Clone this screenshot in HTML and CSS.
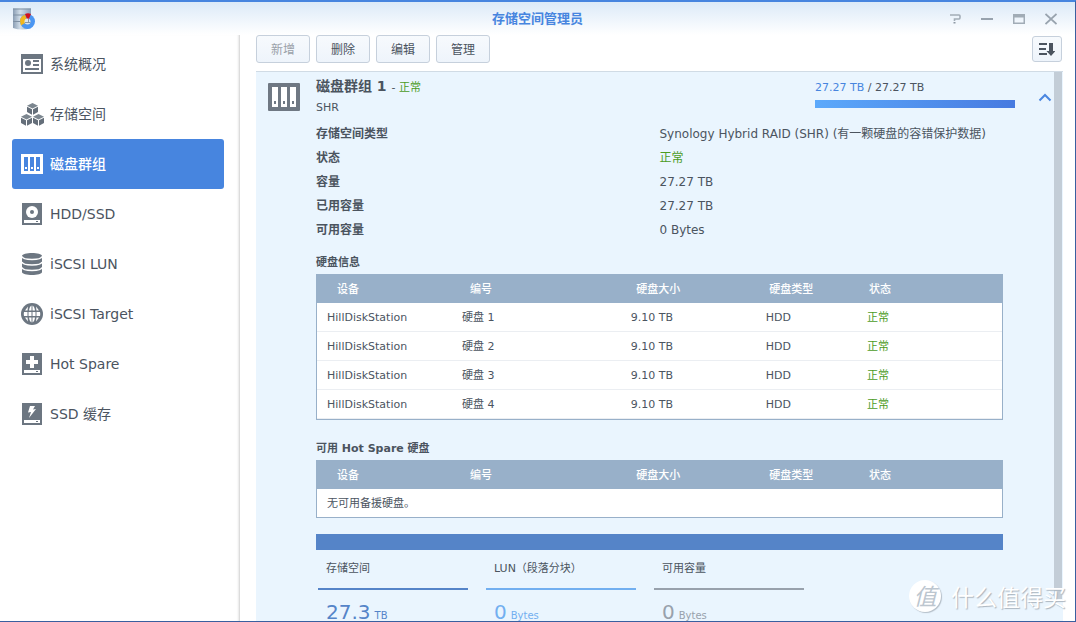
FILE: index.html
```html
<!DOCTYPE html>
<html lang="zh-CN">
<head>
<meta charset="utf-8">
<title>存储空间管理员</title>
<link rel="stylesheet" href="styles.css">
</head>
<body>
<div class="window">
  <header class="titlebar">
    <svg class="app-icon" width="24" height="24" viewBox="0 0 24 24" aria-hidden="true">
      <defs>
        <linearGradient id="steel" x1="0" x2="1" y1="0" y2="0">
          <stop offset="0" stop-color="#8a9db3"/><stop offset=".4" stop-color="#d3dfea"/><stop offset="1" stop-color="#8aa2bc"/>
        </linearGradient>
      </defs>
      <path fill="url(#steel)" d="M1 1.500h18V21q-9 3-18 0z"/>
      <path fill="none" stroke="#7f90a3" d="M1 2h18M1 8h18M1 14.500h18"/>
      <circle cx="15.500" cy="14.500" r="7.500" fill="#4b96f2"/>
      <path fill="#f2b71d" d="M15.500 14.500L9 18.500Q6 10 13 7.500z"/>
      <path fill="#d3101f" d="M16 14l-3-7q3-1.500 6 0z"/>
      <circle cx="15.500" cy="14.500" r="3" fill="#dce6ee"/>
      <path stroke="#8797a7" d="M13 15.500h5.500M16.500 12v3"/>
    </svg>
    <h1 class="app-title">存储空间管理员</h1>
    <div class="window-tools">
      <button class="tool" type="button" aria-label="帮助"><svg width="12" height="12" viewBox="0 0 12 12"><path fill="none" stroke="#a3adb7" stroke-width="1.600" d="M1 2h9q1 0 1 1v1.500q0 1.500-1 1.500H5.500v2"/><path fill="#8e99a4" d="M4.500 9h2v1.500h-2z"/></svg></button>
      <button class="tool" type="button" aria-label="最小化"><svg width="12" height="12" viewBox="0 0 12 12"><path fill="#98a3ae" d="M0 5h12v2H0z"/></svg></button>
      <button class="tool" type="button" aria-label="最大化"><svg width="12" height="12" viewBox="0 0 12 12"><path fill="#a1acb6" fill-rule="evenodd" d="M0 1h12v10H0zM1.500 4.500v5h9v-5z"/></svg></button>
      <button class="tool" type="button" aria-label="关闭"><svg width="12" height="12" viewBox="0 0 12 12"><path stroke="#98a3ae" stroke-width="1.700" d="M.500 1l11 10M11.500 1l-11 10"/></svg></button>
    </div>
  </header>

  <div class="body">
    <nav class="sidebar">
      <a class="nav-item" href="#overview"><svg width="24" height="24" viewBox="0 0 24 24"><path fill="#6c7681" d="M1 2h22v20H1z"/><path fill="#fff" d="M3 7h18v13H3z"/><circle cx="8" cy="11" r="3" fill="#6c7681"/><path fill="#6c7681" d="M13 8h6v2h-6zM13 12h6v2h-6zM5 16h14v2H5z"/></svg>系统概况</a>
      <a class="nav-item" href="#volume"><svg width="24" height="24" viewBox="0 0 24 24"><defs><g id="cube"><path fill="#7c868f" d="M5.500 0L11 2.700 5.500 5.400 0 2.700z"/><path fill="#656f7a" d="M0 3.700l5 2.500v5.500L0 9zM11 3.700L6 6.200v5.500L11 9z"/></g></defs><use href="#cube" x="7" y="1"/><use href="#cube" x="1" y="12"/><use href="#cube" x="13" y="12"/></svg>存储空间</a>
      <a class="nav-item nav-item-active" href="#group" aria-current="page"><svg width="24" height="24" viewBox="0 0 24 24"><path fill="#fff" fill-rule="evenodd" d="M1 2h22v20H1zM4 5v14h4V5zM10 5v14h4V5zM16 5v14h4V5z"/><path fill="#fff" d="M5 15h2v2H5zM11 15h2v2h-2zM17 15h2v2h-2z"/></svg>磁盘群组</a>
      <a class="nav-item" href="#hdd"><svg width="24" height="24" viewBox="0 0 24 24"><path fill="#6c7681" d="M2 1h20v22H2z"/><circle cx="12" cy="10" r="6" fill="#fff"/><circle cx="12" cy="10" r="2" fill="#6c7681"/><path fill="#fff" d="M4 18h16v3H4z"/><path fill="#6c7681" d="M16 19h2v1h-2z"/></svg>HDD/SSD</a>
      <a class="nav-item" href="#lun"><svg width="24" height="24" viewBox="0 0 24 24"><path fill="#6c7681" d="M2 4c0-4 20-4 20 0v16c0 4-20 4-20 0z"/><path fill="none" stroke="#fff" stroke-width="1.300" d="M2 4.500c1 4 19 4 20 0M2 10c1 4 19 4 20 0M2 15.500c1 4 19 4 20 0"/></svg>iSCSI LUN</a>
      <a class="nav-item" href="#target"><svg width="24" height="24" viewBox="0 0 24 24"><circle cx="12" cy="12" r="11" fill="#6c7681"/><g fill="#fff"><path d="M4 10h3.500v4H4q-.500-2 0-4zM8.500 10h3v4h-3zM12.500 10h3v4h-3zM16.500 10H20q.500 2 0 4h-3.500z"/><path d="M5 8.500L8 4.500 7.500 8.500zM9 8.500q.500-4 2.500-5v5zM12.500 8.500v-5q2 1 2.500 5zM16.500 8.500L16 4.500l3 4z"/><path d="M5 15.500l3 4-.500-4zM9 15.500q.500 4 2.500 5v-5zM12.500 15.500v5q2-1 2.500-5zM16.500 15.500l-.500 4 3-4z"/></g></svg>iSCSI Target</a>
      <a class="nav-item" href="#spare"><svg width="24" height="24" viewBox="0 0 24 24"><path fill="#6c7681" d="M2 1h20v22H2z"/><path fill="#fff" d="M10 4h4v4h4v4h-4v4h-4v-4H6V8h4zM4 18h16v3H4z"/><path fill="#6c7681" d="M16 19h2v1h-2z"/></svg>Hot Spare</a>
      <a class="nav-item" href="#cache"><svg width="24" height="24" viewBox="0 0 24 24"><path fill="#6c7681" d="M2 1h20v22H2z"/><path fill="#fff" d="M10 4h5l-2 3.500 3-.500-7 9 2-6-3 .500zM4 18h16v3H4z"/><path fill="#6c7681" d="M16 19h2v1h-2z"/></svg>SSD 缓存</a>
    </nav>

    <main class="main">
      <div class="toolbar">
        <button class="btn" type="button" disabled>新增</button>
        <button class="btn" type="button">删除</button>
        <button class="btn" type="button">编辑</button>
        <button class="btn" type="button">管理</button>
        <button class="btn btn-sort" type="button" aria-label="排序"><svg width="16" height="14" viewBox="0 0 16 14"><path fill="#4b545f" d="M0 1h8v2H0zM0 6h7v2H0zM0 11h8v2H0zM10 1h4v8h2.500L12 14 7.500 9H10z"/></svg></button>
      </div>

      <div class="panel">
        <section class="group">
          <div class="group-head">
            <svg width="32" height="28" viewBox="0 0 32 28" aria-hidden="true"><rect width="32" height="28" rx="1" fill="#6f7883"/><path fill="#fff" d="M4 4h6v20H4zM13 4h6v20h-6zM22 4h6v20h-6z"/><path fill="#6f7883" d="M6 18h2v3H6zM15 18h2v3h-2zM24 18h2v3h-2z"/></svg>
            <div class="group-name">
              <h2 class="group-title">磁盘群组 1 <span class="group-state">- <span class="ok">正常</span></span></h2>
              <p class="group-type">SHR</p>
            </div>
            <div class="usage">
              <p class="usage-text"><span class="used">27.27 TB</span> / 27.27 TB</p>
              <div class="usage-bar"></div>
            </div>
            <button class="collapse" type="button" aria-label="收起"><svg width="14" height="9" viewBox="0 0 14 9"><path fill="none" stroke="#4a86e0" stroke-width="2" d="M1.500 7.500L7 2l5.500 5.500"/></svg></button>
          </div>

          <div class="details">
            <dl class="info">
              <dt>存储空间类型</dt><dd>Synology Hybrid RAID (SHR) (有一颗硬盘的容错保护数据)</dd>
              <dt>状态</dt><dd class="ok">正常</dd>
              <dt>容量</dt><dd>27.27 TB</dd>
              <dt>已用容量</dt><dd>27.27 TB</dd>
              <dt>可用容量</dt><dd>0 Bytes</dd>
            </dl>

            <h3 class="section-title">硬盘信息</h3>
            <table class="disks">
              <thead><tr><th>设备</th><th>编号</th><th>硬盘大小</th><th>硬盘类型</th><th>状态</th></tr></thead>
              <tbody>
                <tr><td>HillDiskStation</td><td>硬盘 1</td><td>9.10 TB</td><td>HDD</td><td class="ok">正常</td></tr>
                <tr><td>HillDiskStation</td><td>硬盘 2</td><td>9.10 TB</td><td>HDD</td><td class="ok">正常</td></tr>
                <tr><td>HillDiskStation</td><td>硬盘 3</td><td>9.10 TB</td><td>HDD</td><td class="ok">正常</td></tr>
                <tr><td>HillDiskStation</td><td>硬盘 4</td><td>9.10 TB</td><td>HDD</td><td class="ok">正常</td></tr>
              </tbody>
            </table>

            <h3 class="section-title">可用 Hot Spare 硬盘</h3>
            <table class="disks disks-empty">
              <thead><tr><th>设备</th><th>编号</th><th>硬盘大小</th><th>硬盘类型</th><th>状态</th></tr></thead>
              <tbody><tr><td colspan="5">无可用备援硬盘。</td></tr></tbody>
            </table>

            <div class="allocation"></div>
            <div class="stats">
              <div class="stat stat-volume"><p class="stat-label">存储空间</p><p class="stat-value"><span>27.3</span><small>TB</small></p></div>
              <div class="stat stat-lun"><p class="stat-label">LUN（段落分块）</p><p class="stat-value"><span>0</span><small>Bytes</small></p></div>
              <div class="stat stat-free"><p class="stat-label">可用容量</p><p class="stat-value"><span>0</span><small>Bytes</small></p></div>
            </div>
          </div>
        </section>
        <div class="scroll-track"><div class="scroll-thumb"></div></div>
      </div>
    </main>
  </div>
  <div class="watermark"><span class="watermark-badge">值</span><span>什么值得买</span></div>
</div>
</body>
</html>
```

FILE: styles.css
```css
* { box-sizing: border-box; }

body, h1, h2, h3, p, dl, dd { margin: 0; }

body, button {
  font-family: "DejaVu Sans", "Noto Sans CJK SC", sans-serif;
  color: #4b545f;
}

.window {
  position: relative;
  display: flex;
  flex-direction: column;
  height: 100vh;
  overflow: hidden;
  background: #fff;
  border-top: 2px solid #4785df;
  border-right: 1px solid #3a5f9f;
  border-bottom: 1px solid #3a5f9f;
}

.titlebar {
  display: grid;
  grid-template-columns: 1fr auto 1fr;
  align-items: center;
  flex: none;
  height: 33px;
  padding: 0 12px;
  background: linear-gradient(#dceaf8, #fff);
}

.app-title {
  font-size: 13px;
  line-height: 20px;
  color: #4785df;
}

.window-tools {
  display: flex;
  justify-content: flex-end;
  gap: 20px;
  padding-right: 6px;
}

.tool, .collapse {
  display: flex;
  padding: 0;
  background: none;
  border: 0;
}

.body {
  display: flex;
  flex: 1;
  min-height: 0;
}

.sidebar {
  flex: none;
  width: 240px;
  padding: 4px 15px 0 12px;
  border-right: 1px solid #dcdcdc;
  box-shadow: inset -2px 0 2px -1px #e8e8e8;
}

.nav-item {
  display: flex;
  align-items: center;
  gap: 6px;
  height: 50px;
  padding-left: 8px;
  border-radius: 3px;
  font-size: 14px;
  line-height: 18px;
  color: #4b545f;
  text-decoration: none;
}

.nav-item-active {
  background: #4785df;
  color: #fff;
  font-weight: 500;
}

.main {
  display: flex;
  flex-direction: column;
  flex: 1;
  min-width: 0;
  padding: 0 12px 0 16px;
}

.toolbar {
  display: flex;
  align-items: center;
  gap: 6px;
  flex: none;
  height: 28px;
  margin-bottom: 8px;
}

.btn {
  display: flex;
  align-items: center;
  justify-content: center;
  width: 54px;
  height: 28px;
  padding: 0 0 2px;
  border: 1px solid #c6d0dc;
  border-radius: 3px;
  background: linear-gradient(#f7fafd, #eef4fb);
  font-size: 12px;
}

.btn:disabled { color: #9aa1a9; }

.btn-sort {
  width: 30px;
  height: 26px;
  padding: 0;
  margin-left: auto;
  margin-right: 1px;
}

.panel {
  display: flex;
  flex: 1;
  min-height: 0;
  overflow: hidden;
  background: #eaf5fe;
  border-top: 1px solid #d0dbe5;
}

.group { flex: 1; min-width: 0; }

.group-head {
  display: flex;
  align-items: flex-start;
  height: 50px;
  padding: 4px 2px 0 12px;
}

.group-head > svg { margin-top: 7px; }

.group-name { flex: 1; padding-left: 16px; }

.group-title {
  font-size: 14px;
  line-height: 20px;
}

.group-state { font-size: 11px; font-weight: 400; }

.group-type {
  font-size: 11px;
  line-height: 20px;
}

.usage { width: 200px; }

.usage-text {
  font-size: 11px;
  line-height: 24px;
}

.used { color: #4785df; }

.usage-bar {
  height: 8px;
  background: linear-gradient(90deg, #5ca9fb, #477ae0);
}

.collapse { margin: 17px 0 0 23px; }

.details { padding: 0 51px 0 60px; }

.info {
  display: grid;
  grid-template-columns: 1fr 1fr;
  font-size: 12px;
  line-height: 24px;
}

.info dt { font-weight: 700; }
.info dd { white-space: nowrap; }

.ok, .info .ok { color: #4c9c1f; }

.section-title {
  margin-top: 10px;
  font-size: 11px;
  line-height: 22px;
}

.disks {
  display: block;
  border: 1px solid #98b0c9;
  background: #fff;
  font-size: 11px;
}

.disks thead, .disks tbody { display: block; }

.disks tr {
  display: grid;
  grid-template-columns: 20fr 25fr 20fr 15fr 20fr;
  padding-right: 10px;
}

.disks thead tr {
  padding-left: 10px;
  background: #98b0c9;
}

.disks th, .disks td {
  padding: 2px 0 0 10px;
  line-height: 26px;
  text-align: left;
}

.disks th {
  font-weight: 500;
  color: #fff;
}

.disks tbody tr { border-bottom: 1px solid #ebeef2; }
.disks-empty tbody tr { border-bottom: 0; }
.disks-empty td { grid-column: 1 / -1; }

.disks + .section-title { margin-top: 18px; }

.allocation {
  height: 16px;
  margin-top: 16px;
  background: #5584c8;
}

.stats {
  display: flex;
  gap: 18px;
  padding-left: 2px;
}

.stat { width: 150px; }

.stat-label {
  height: 40px;
  padding-left: 8px;
  border-bottom: 2px solid;
  font-size: 11px;
  line-height: 38px;
}

.stat-value {
  display: flex;
  align-items: baseline;
  gap: 4px;
  padding: 10px 0 10px 8px;
  font-size: 20px;
  line-height: 24px;
}

.stat-value small { font-size: 10px; line-height: 12px; }

.stat-volume .stat-label { border-color: #5584c8; }
.stat-volume .stat-value { color: #5584c8; }
.stat-lun .stat-label { border-color: #72aff0; }
.stat-lun .stat-value { color: #72aff0; }
.stat-free .stat-label { border-color: #98a1ac; }
.stat-free .stat-value { color: #98a1ac; }

.scroll-track {
  flex: none;
  width: 9px;
}

.scroll-thumb {
  width: 8px;
  height: 96%;
  background: #c3cdd7;
}

.watermark {
  position: absolute;
  right: 9px;
  bottom: 8px;
  display: flex;
  align-items: center;
  gap: 10px;
  font-family: "Noto Sans CJK SC", sans-serif;
  font-size: 23px;
  line-height: 34px;
  color: #fff;
  text-shadow: 1px 1px 1px #aab4be;
}

.watermark-badge {
  width: 32px;
  height: 32px;
  border-radius: 50%;
  background: #fff;
  box-shadow: 1px 1px 1px #b4bec8;
  font-size: 23px;
  font-style: italic;
  line-height: 30px;
  text-align: center;
  color: #bcc6cf;
  text-shadow: none;
}
```
